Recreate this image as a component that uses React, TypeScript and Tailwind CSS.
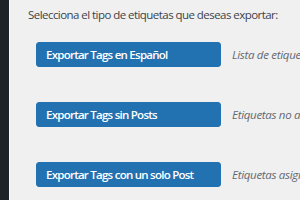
const ROWS = [
  { label: 'Exportar Tags en Español', desc: 'Lista de etiquetas en español' },
  { label: 'Exportar Tags sin Posts', desc: 'Etiquetas no asignadas a ningún post' },
  { label: 'Exportar Tags con un solo Post', desc: 'Etiquetas asignadas a un solo post' },
]

export default function App() {
  return (
    <div
      className="flex w-[300px] h-[200px] overflow-hidden bg-[#f0f0f1]"
      style={{ fontFamily: '"Open Sans", "Noto Sans", sans-serif' }}
    >
      <div className="w-[9px] shrink-0 bg-[#1d2327]" />
      <div className="w-px shrink-0 bg-[#fafafa]" />
      <main className="flex-1 min-w-0 pl-[18px] pt-[6px]">
        <p className="text-[11.5px] leading-[18px] text-[#3c434a] whitespace-nowrap tracking-[-0.55px]">
          Selecciona el tipo de etiquetas que deseas exportar:
        </p>
        <div className="flex flex-col gap-[35px] mt-[18px] pl-[8px]">
          {ROWS.map((row) => (
            <div key={row.label} className="flex items-center gap-[11px] whitespace-nowrap">
              <button className="w-[185px] h-[25px] shrink-0 rounded-[3px] bg-[#2271b1] border border-[#2271b1] text-left pl-[9px] text-[11.5px] font-semibold text-white tracking-[-0.75px]">
                {row.label}
              </button>
              <span className="text-[11.5px] italic text-[#646970] tracking-[-0.3px]">{row.desc}</span>
            </div>
          ))}
        </div>
      </main>
    </div>
  )
}
